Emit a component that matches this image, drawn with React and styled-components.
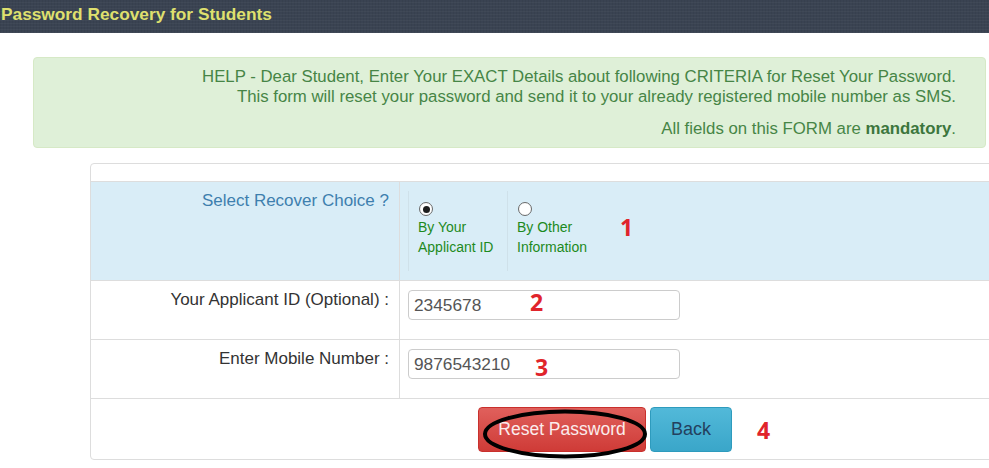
import React from 'react';
import styled, { createGlobalStyle } from 'styled-components';

const GlobalStyle = createGlobalStyle`
  html, body {
    margin: 0;
    padding: 0;
    background: #fff;
    overflow: hidden;
  }
  body {
    font-family: "Liberation Sans", Arial, sans-serif;
    width: 989px;
    height: 468px;
  }
`;

const Header = styled.div`
  height: 33px;
  background-color: #3a4352;
  background-image: repeating-linear-gradient(0deg, rgba(255,255,255,0.03) 0 1px, transparent 1px 3px),
    repeating-linear-gradient(90deg, rgba(0,0,0,0.05) 0 1px, transparent 1px 3px);
  color: #dfe06e;
  font-weight: bold;
  font-size: 17.3px;
  line-height: 28px;
  padding-left: 1px;
`;

const Alert = styled.div`
  margin: 24px 0 0 33px;
  width: 953px;
  box-sizing: border-box;
  padding: 9px 29px 8px 15px;
  background: #dff0d8;
  border: 1px solid #d6e9c6;
  border-radius: 4px;
  color: #468546;
  font-size: 16.8px;
  line-height: 20px;
  text-align: right;

  p {
    margin: 0;
  }
  p + p {
    margin-top: 12px;
  }
  b {
    color: #3c763d;
  }
`;

const Panel = styled.div`
  margin: 15px 0 0 90px;
  width: 1040px;
  border: 1px solid #ddd;
  border-radius: 4px;
  padding-top: 17px;
  overflow: hidden;
`;

const Row = styled.div`
  display: grid;
  grid-template-columns: 309px 1fr;
  border-top: 1px solid #ddd;
  background: ${p => (p.info ? '#d9edf7' : '#fff')};
  min-height: ${p => p.h}px;
  box-sizing: border-box;
`;

const Label = styled.div`
  text-align: right;
  padding: 9px 10px 0 0;
  font-size: 17px;
  line-height: 20px;
  color: ${p => (p.info ? '#3e7fae' : '#333')};
  border-right: 1px solid #ddd;
`;

const Field = styled.div`
  display: flex;
  align-items: flex-start;
  padding: 9px 0 0 8px;
`;

const ChoiceGroup = styled.div`
  display: flex;
  align-items: center;
`;

const Choice = styled.label`
  display: flex;
  flex-direction: column;
  width: 99px;
  height: 80px;
  box-sizing: border-box;
  padding: 11px 0 0 9px;
  border-left: 1px solid #cfe1ea;
  color: #1d8a1d;
  font-size: 14px;
  line-height: 20px;
`;

const Radio = styled.span`
  width: 14px;
  height: 14px;
  box-sizing: border-box;
  border-radius: 50%;
  border: 1px solid #6b6b6b;
  background: radial-gradient(circle, #fff 0 60%, #e4e4e4 100%);
  margin: 0 0 1px 1px;
  position: relative;

  &::after {
    content: '';
    display: ${p => (p.checked ? 'block' : 'none')};
    position: absolute;
    left: 2.5px;
    top: 2.5px;
    width: 7px;
    height: 7px;
    border-radius: 50%;
    background: #1e1e1e;
  }
`;

const Mark = styled.span`
  font-family: "Open Sans", "DejaVu Sans", sans-serif;
  font-weight: bold;
  font-size: 23px;
  line-height: 24px;
  color: #e0242b;
  margin: ${p => p.m};
`;

const Input = styled.div`
  width: 272px;
  height: 30px;
  box-sizing: border-box;
  border: 1px solid #ccc;
  border-radius: 4px;
  padding: 0 5px;
  font-size: 17.3px;
  line-height: 29px;
  color: #555;
  display: flex;
  align-items: center;
  position: relative;
`;

const InputMark = styled(Mark)`
  position: absolute;
  left: ${p => p.left}px;
  top: ${p => p.top}px;
`;

const ButtonRow = styled.div`
  border-top: 1px solid #ddd;
  display: flex;
  align-items: center;
  padding: 8px 0 7px 387px;
  gap: 4px;
`;

const Button = styled.div`
  position: relative;
  height: 45px;
  width: ${p => p.w}px;
  box-sizing: border-box;
  border-radius: 4px;
  display: flex;
  align-items: center;
  justify-content: center;
  font-size: ${p => p.fs}px;
  color: ${p => (p.danger ? '#fbecec' : '#23405e')};
  background: ${p => (p.danger
    ? 'linear-gradient(#e0605c, #cf3b37)'
    : 'linear-gradient(#52b9d9, #3aa6c9)')};
  border: 1px solid ${p => (p.danger ? '#c9302c' : '#2e9bbd')};
`;

const Ring = styled.svg`
  position: absolute;
  left: 3px;
  top: 1px;
  overflow: visible;
`;

export default function App() {
  return (
    <>
      <GlobalStyle />
      <Header>Password Recovery for Students</Header>
      <Alert>
        <p>
          HELP - Dear Student, Enter Your EXACT Details about following CRITERIA for Reset Your Password.
          <br />
          This form will reset your password and send it to your already registered mobile number as SMS.
        </p>
        <p>
          All fields on this FORM are <b>mandatory</b>.
        </p>
      </Alert>
      <Panel>
        <Row info h={99}>
          <Label info>Select Recover Choice ?</Label>
          <Field>
            <ChoiceGroup>
              <Choice>
                <Radio checked />
                <span>By Your</span>
                <span>Applicant ID</span>
              </Choice>
              <Choice>
                <Radio />
                <span>By Other</span>
                <span>Information</span>
              </Choice>
              <Mark m="0 0 8px 14px">1</Mark>
            </ChoiceGroup>
          </Field>
        </Row>
        <Row h={59}>
          <Label>Your Applicant ID (Optional) :</Label>
          <Field>
            <Input>
              2345678
              <InputMark left={121} top={-1}>2</InputMark>
            </Input>
          </Field>
        </Row>
        <Row h={59}>
          <Label>Enter Mobile Number :</Label>
          <Field>
            <Input>
              9876543210
              <InputMark left={126} top={5}>3</InputMark>
            </Input>
          </Field>
        </Row>
        <ButtonRow>
          <Button danger w={168} fs={17.5}>
            Reset Password
            <Ring width="166" height="50" viewBox="0 0 166 50">
              <ellipse cx="83" cy="25" rx="80" ry="22.5" fill="none" stroke="#000" strokeWidth="4" />
            </Ring>
          </Button>
          <Button w={82} fs={18}>Back</Button>
          <Mark m="0 0 0 21px">4</Mark>
        </ButtonRow>
      </Panel>
    </>
  );
}
